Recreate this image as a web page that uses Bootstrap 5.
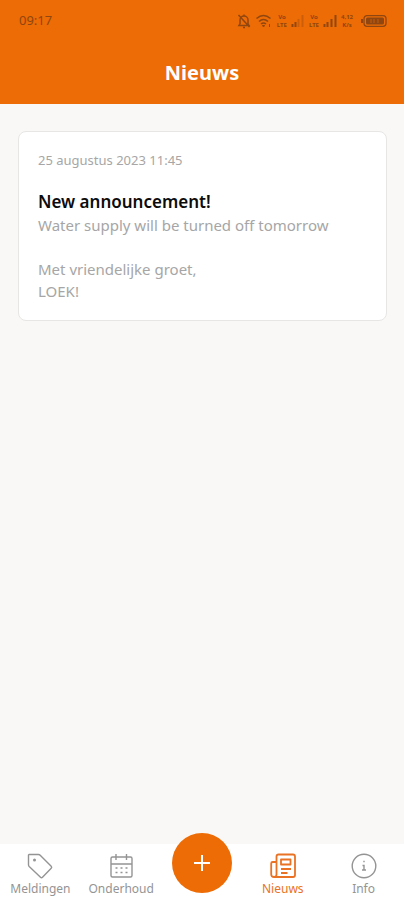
<!DOCTYPE html>
<html lang="nl">
<head>
<meta charset="utf-8">
<meta name="viewport" content="width=device-width, initial-scale=1">
<title>Nieuws</title>
<link href="https://cdn.jsdelivr.net/npm/bootstrap@5.3.0/dist/css/bootstrap.min.css" rel="stylesheet">
<style>
  body { font-family: "Noto Sans", "Open Sans", sans-serif; background: #faf8f6; color: #a6a6a6; }
  .app-head { background: #ed6c05; }
  .status-row { height: 42px; padding: 0 17px 0 19px; color: #8f4610; font-size: 13px; }
  .status-row svg { display: block; }
  .net-label { font-size: 6px; line-height: 8px; font-weight: 700; }
  .title-row { height: 62px; }
  .title-row h1 { font-size: 20px; line-height: 28px; }
  .news-wrap { padding: 27px 17px 27px 18px; }
  .news-card { border: 1px solid #e8e6e4; border-radius: 8px; padding: 18px 19px; }
  .news-date { font-size: 13px; line-height: 20px; }
  .news-title { font-size: 17px; line-height: 24px; font-weight: 600; color: #0c0c0c; margin: 20px 0 0; }
  .news-text { font-size: 15px; line-height: 22px; }
  .tab-bar { height: 56px; }
  .tab-item { font-size: 12px; line-height: 18px; color: #949494; }
  .tab-item.active { color: #ea7224; }
  .add-btn { width: 60px; height: 60px; background: #ed6c05; margin-top: -11px; }
</style>
<script src="https://cdn.jsdelivr.net/npm/bootstrap@5.3.0/dist/js/bootstrap.bundle.min.js" defer></script>
</head>
<body class="d-flex flex-column min-vh-100">
<header class="app-head">
  <div class="status-row d-flex align-items-center justify-content-between">
    <span>09:17</span>
    <div class="d-flex align-items-center gap-1">
      <svg width="14" height="16" viewBox="0 0 14 16" fill="none" stroke="currentColor" stroke-width="1.500" aria-hidden="true"><path d="M3 11V7a4 4 0 0 1 8 0v4l1 1.500H2L3 11M6 14.500h2M7 1.500V3M1.500 2l11 12"/></svg>
      <svg width="18" height="14" viewBox="0 0 17 14" fill="none" stroke="currentColor" stroke-width="1.600" aria-hidden="true"><path d="M1 4.500q7-6 14 0M3.500 7.500q4.500-4 9 0M5.500 10q2.500-2 5 0"/><path d="M7 11.500h2L8 13zM14 10v3" stroke-width="1"/></svg>
      <span class="net-label text-center">Vo<br>LTE</span>
      <svg width="14" height="12" viewBox="0 0 13 12" fill="currentColor" aria-hidden="true"><path d="M0 9h2v3H0zM3 7h2v5H3z"/><path d="M6 4h2v8H6zM10 0h2v12h-2z" opacity=".35"/></svg>
      <span class="net-label text-center">Vo<br>LTE</span>
      <svg width="14" height="12" viewBox="0 0 13 12" fill="currentColor" aria-hidden="true"><path d="M0 9h2v3H0zM3 7h2v5H3zM7 4h2v8H7zM11 0h2v12h-2z"/></svg>
      <span class="net-label text-center me-1">4,12<br>K/s</span>
      <svg width="26" height="12" viewBox="0 0 26 12" aria-hidden="true"><rect x="3" y=".7" width="22" height="10.600" rx="3" fill="none" stroke="currentColor" stroke-width="1.300"/><path d="M1 4v4" stroke="currentColor" stroke-width="2"/><rect x="5" y="2.500" width="18" height="7" rx="1.500" fill="currentColor"/><path d="M10 4v4M13 4v4M17 4v4" stroke="#ed6c05" opacity=".6"/></svg>
    </div>
  </div>
  <div class="title-row d-flex align-items-center justify-content-center">
    <h1 class="m-0 fw-bold text-white">Nieuws</h1>
  </div>
</header>

<main class="news-wrap flex-grow-1">
  <article class="news-card bg-white">
    <time class="news-date d-block" datetime="2023-08-25T11:45">25 augustus 2023 11:45</time>
    <h2 class="news-title">New announcement!</h2>
    <p class="news-text m-0">Water supply will be turned off tomorrow<br><br>Met vriendelijke groet,<br>LOEK!</p>
  </article>
</main>

<nav class="tab-bar bg-white d-flex sticky-bottom text-center" aria-label="Hoofdmenu">
  <a href="#meldingen" class="tab-item col d-flex flex-column align-items-center pt-2 text-decoration-none">
    <svg width="28" height="28" viewBox="0 0 28 28" fill="none" stroke="currentColor" stroke-width="1.400" stroke-linejoin="round" aria-hidden="true"><path d="M3 2.500h9.500q1 0 1.700.7l11 11q1 1 0 2l-8.700 9q-1 1-2 0L3.200 14.500q-.7-.7-.7-1.700V3z"/><circle cx="8.500" cy="8" r=".8"/></svg>
    <span>Meldingen</span>
  </a>
  <a href="#onderhoud" class="tab-item col d-flex flex-column align-items-center pt-2 text-decoration-none">
    <svg width="28" height="28" viewBox="0 0 28 28" fill="none" stroke="currentColor" stroke-width="1.400" aria-hidden="true"><rect x="4" y="5" width="21" height="20" rx="1.500"/><path d="M4 12h21M9 2v6M19.500 2v6"/><path d="M8.500 16h2M13.500 16h2M18.500 16h2M8.500 20.500h2M13.500 20.500h2M18.500 20.500h2"/></svg>
    <span>Onderhoud</span>
  </a>
  <div class="col d-flex justify-content-center">
    <button type="button" class="add-btn btn border-0 rounded-circle p-0 d-flex align-items-center justify-content-center flex-shrink-0" aria-label="Nieuwe melding">
      <svg width="18" height="18" viewBox="0 0 18 18" stroke="#fff" stroke-width="2" aria-hidden="true"><path d="M1 9h16M9 1v16"/></svg>
    </button>
  </div>
  <a href="#nieuws" class="tab-item active col d-flex flex-column align-items-center pt-2 text-decoration-none" aria-current="page">
    <svg width="28" height="28" viewBox="0 0 28 28" fill="none" stroke="currentColor" stroke-width="1.800" stroke-linejoin="round" aria-hidden="true"><path d="M7.500 22V4.500q0-2 2-2H24q2 0 2 2V23q0 2-2 2H5q-2.800 0-2.800-2.800V11.500q0-1.500 1.500-1.500h3.800M7.500 21v1.500q0 2.500-2.500 2.500"/><path d="M12 7.500h9.500v5H12zM12 17h10M12 21h6.500"/></svg>
    <span>Nieuws</span>
  </a>
  <a href="#info" class="tab-item col d-flex flex-column align-items-center pt-2 text-decoration-none">
    <svg width="28" height="28" viewBox="0 0 28 28" fill="none" stroke="currentColor" stroke-width="1.400" aria-hidden="true"><circle cx="14" cy="14" r="11.800"/><path d="M12.500 13.500H14V18M12 18h4M13.300 9.500h1.400"/></svg>
    <span>Info</span>
  </a>
</nav>
</body>
</html>
